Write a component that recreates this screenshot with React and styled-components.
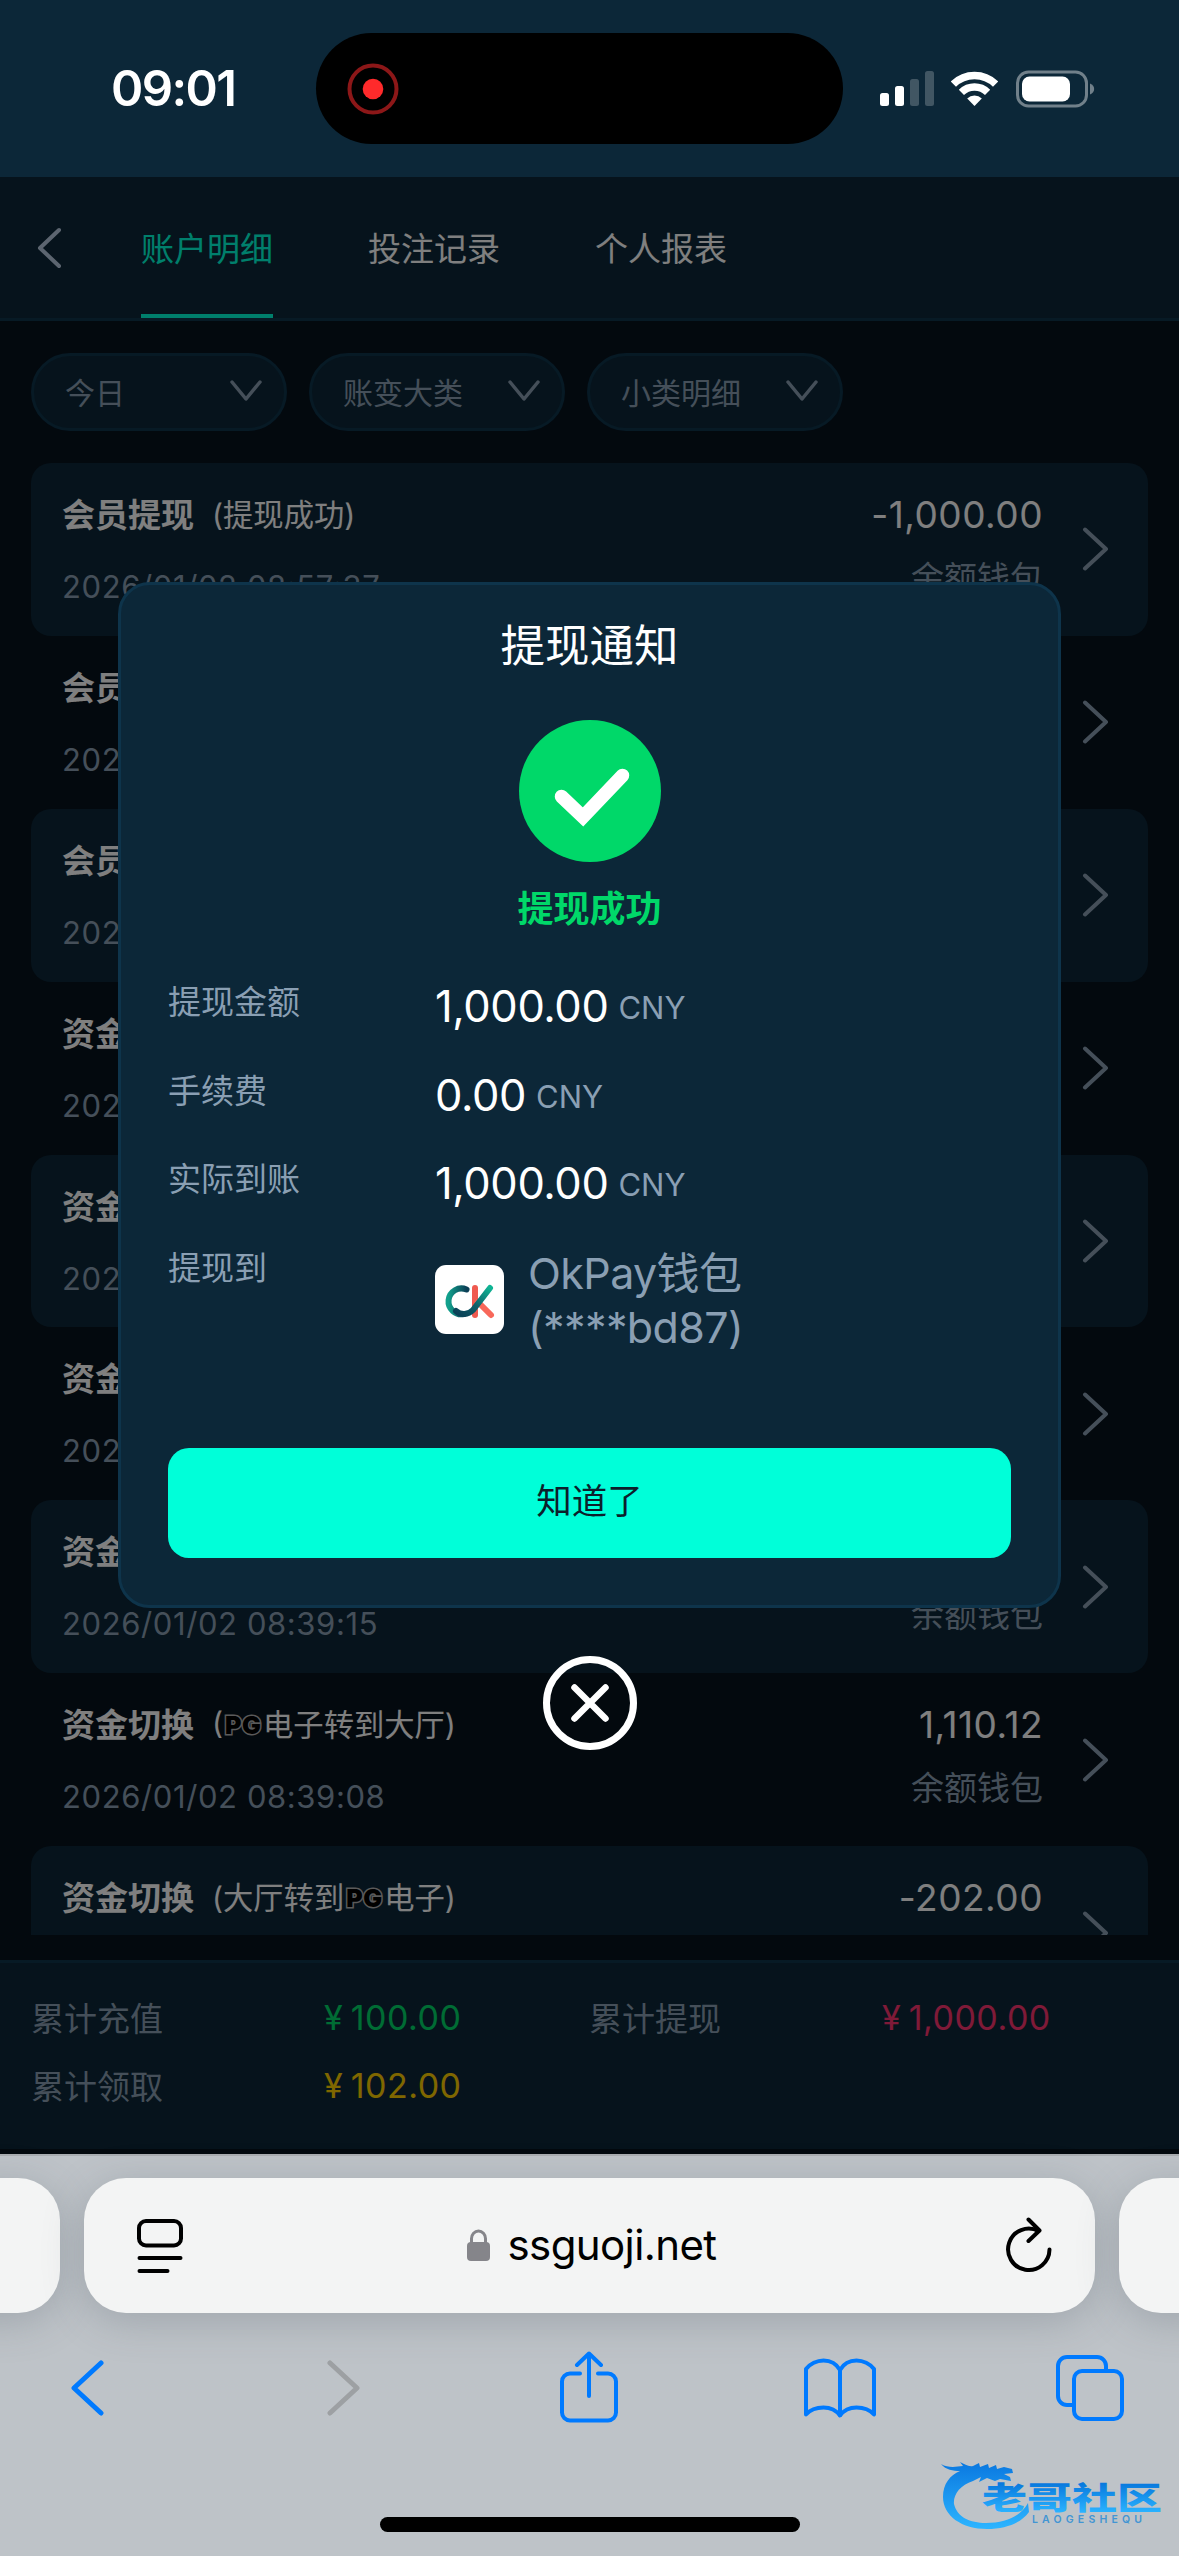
import React from 'react'
import styled, {createGlobalStyle} from 'styled-components'

const colors = {
  panel: '#0c2738',
  page: '#07121d',
  line: '#0e344b',
  text: '#ffffff',
  muted: '#8a9fb3',
  accent: '#00ffd9',
  green: '#00d869',
  red: '#ff3470',
  yellow: '#ffcf00',
  ios: '#007aff',
}

const GlobalStyle = createGlobalStyle`
  * { box-sizing: border-box; }
  body {
    margin: 0;
    background: ${colors.page};
    font-family: Inter, 'Noto Sans CJK SC', sans-serif;
  }
  svg { display: block; flex: none; }
`

const Screen = styled.div`
  position: relative;
  display: flex;
  flex-direction: column;
  width: 1179px;
  height: 2556px;
  overflow: hidden;
  background: ${colors.page};
  color: ${colors.text};
`

/* Status bar */

const StatusBar = styled.header`
  display: grid;
  grid-template-columns: 316px 527px 1fr;
  align-items: center;
  height: 177px;
  background: ${colors.panel};
`

const Clock = styled.div`
  padding-left: 111px;
  font-size: 49px;
  font-weight: 600;
  line-height: 60px;
  letter-spacing: -1.6px;
`

const Island = styled.div`
  display: flex;
  align-items: center;
  height: 111px;
  padding-left: 31px;
  border-radius: 56px;
  background: #000;
`

const StatusIcons = styled.div`
  display: flex;
  align-items: center;
  gap: 17px;
  padding-left: 37px;
`

/* Account page */

const Account = styled.main`
  display: flex;
  flex-direction: column;
  height: 1978px;
`

const NavBar = styled.nav`
  display: flex;
  height: 144px;
  padding-left: 37px;
  align-items: stretch;
  background: ${colors.panel};
  border-bottom: 3px solid ${colors.line};
`

const Back = styled.button`
  display: flex;
  align-items: center;
  width: 104px;
  padding: 0;
  border: 0;
  background: none;
`

const Tabs = styled.div`
  display: flex;
  gap: 95px;
`

const Tab = styled.a`
  display: flex;
  align-items: center;
  padding-top: 2px;
  font-size: 33px;
  color: ${p => p.$active ? colors.accent : colors.text};
  border-bottom: 4px solid ${p => p.$active ? colors.accent : 'transparent'};
`

const Filters = styled.div`
  display: flex;
  gap: 22px;
  padding: 32px 31px;
`

const Filter = styled.div`
  display: flex;
  align-items: center;
  justify-content: space-between;
  width: 256px;
  height: 78px;
  padding: 0 21px 3px 31px;
  border: 3px solid ${colors.line};
  border-radius: 39px;
  background: ${colors.panel};
  font-size: 30px;
  color: ${colors.muted};
`

const List = styled.div`
  height: 1472px;
  margin: 0 31px 25px;
  overflow: hidden;
`

const Entry = styled.div`
  display: grid;
  grid-template-columns: 1fr auto 28px;
  column-gap: 39px;
  align-items: center;
  height: 172.9px;
  padding: 0 38px 0 31px;
  border-radius: 20px;

  &:nth-child(odd) {
    background: ${colors.panel};
  }
`

const EntryInfo = styled.div`
  align-self: start;
  padding-top: 26px;
`

const EntryTitle = styled.div`
  display: flex;
  align-items: center;
  height: 48px;
  font-size: 33px;
  font-weight: 700;
`

const EntryNote = styled.span`
  display: flex;
  align-items: center;
  margin-left: 18px;
  font-size: 30.3px;
  font-weight: 400;
`

const EntryDate = styled.div`
  margin-top: 26px;
  font-size: 31px;
  line-height: 48px;
  letter-spacing: 0.6px;
  color: ${colors.muted};
`

const EntryAmount = styled.div`
  align-self: start;
  padding-top: 28px;
  text-align: right;
  font-size: 37px;
  line-height: 48px;
  letter-spacing: 0.5px;
`

const Wallet = styled.div`
  margin-top: 15px;
  font-size: 33px;
  line-height: 48px;
  letter-spacing: 0;
  color: ${colors.muted};
`

const Brand = styled.span`
  width: 40px;
  padding: 3px 0 0 2px;
  font-size: 25px;
  font-weight: 900;
  letter-spacing: 0.5px;
  color: #000;
  paint-order: stroke;
  -webkit-text-stroke: 3px #b4b4b4;
`

const Summary = styled.footer`
  display: grid;
  grid-template-columns: 293px 265px 293px 1fr;
  grid-auto-rows: 68px;
  height: 189px;
  padding: 20px 0 0 31px;
  align-items: center;
  background: ${colors.panel};
  border-top: 3px solid ${colors.line};
  font-size: 33px;
`

const SummaryLabel = styled.span`
  color: ${colors.muted};
`

const SummaryValue = styled.span`
  font-size: 34px;
  letter-spacing: 0.5px;
  color: ${p => p.$color};

  &::first-letter {
    letter-spacing: 8px;
  }
`

/* Withdrawal notice */

const Overlay = styled.div`
  position: absolute;
  top: 177px;
  left: 0;
  display: flex;
  flex-direction: column;
  align-items: center;
  width: 1179px;
  height: 1978px;
  padding-top: 405px;
  background: rgba(0, 0, 0, 0.5);
`

const Dialog = styled.section`
  display: flex;
  flex-direction: column;
  align-items: center;
  width: 943px;
  height: 1026px;
  padding: 29px 47px 47px;
  border: 3px solid ${colors.line};
  border-radius: 32px;
  background: ${colors.panel};
`

const DialogTitle = styled.h2`
  margin: 0 0 42px;
  font-size: 44.5px;
  font-weight: 400;
  line-height: 64px;
`

const Result = styled.p`
  margin: 23px 0 41px;
  font-size: 36px;
  font-weight: 700;
  line-height: 48px;
  color: ${colors.green};
`

const Details = styled.dl`
  display: grid;
  grid-template-columns: 267px 1fr;
  grid-auto-rows: 88.6px;
  width: 100%;
  margin: 0;
`

const Term = styled.dt`
  font-size: 33px;
  line-height: 56px;
  color: ${colors.muted};
`

const Value = styled.dd`
  margin: 0;
  padding-top: 2px;
  font-size: 43.5px;
  line-height: 60px;
  letter-spacing: -0.4px;
`

const Unit = styled.span`
  margin-left: 10px;
  font-size: 31px;
  letter-spacing: 0;
  vertical-align: 3px;
  color: ${colors.muted};
`

const Payee = styled.dd`
  display: flex;
  align-items: center;
  gap: 24px;
  height: 108px;
  margin: 6px 0 0;
  font-size: 43px;
  line-height: 54px;
  letter-spacing: -0.6px;
  color: ${colors.muted};
`

const Confirm = styled.button`
  width: 843px;
  height: 110px;
  margin-top: auto;
  padding: 0 0 9px;
  border: 0;
  border-radius: 21px;
  background: ${colors.accent};
  color: #0c1f2c;
  font: inherit;
  font-size: 35.5px;
`

const Close = styled.button`
  margin-top: 48px;
  padding: 0;
  border: 0;
  background: none;
`

/* Safari chrome */

const Browser = styled.div`
  display: flex;
  flex-direction: column;
  height: 402px;
  margin-top: -1px;
  padding-top: 22px;
  border-top: 2px solid #a9adb1;
  background: #bec3c8;
  color: #000;
  z-index: 1;
`

const AddressRow = styled.div`
  display: flex;
  justify-content: center;
  gap: 24px;
`

const TabCard = styled.div`
  display: flex;
  flex: none;
  align-items: center;
  justify-content: space-between;
  width: 1011px;
  height: 135px;
  padding: 0 43px 0 53px;
  border-radius: 42px;
  background: #f3f4f4;
  box-shadow: 0 8px 40px rgba(80, 90, 100, 0.28);
`

const Url = styled.div`
  display: flex;
  align-items: center;
  gap: 18px;
  padding: 0 6px 1px 0;
  font-size: 42px;
  line-height: 50px;
  letter-spacing: -0.6px;
`

const Toolbar = styled.div`
  display: flex;
  align-items: center;
  justify-content: space-between;
  height: 150px;
  padding: 0 53px 0 52px;
`

const ToolButton = styled.button`
  display: flex;
  justify-content: center;
  width: 72px;
  padding: 0 0 ${p => p.$lift || 0}px;
  border: 0;
  background: none;
`

const HomeIndicator = styled.div`
  width: 420px;
  height: 15px;
  margin: 54px auto 0;
  border-radius: 8px;
  background: #000;
`

const Watermark = styled.svg`
  position: absolute;
  left: 930px;
  top: 2450px;
  z-index: 2;
`

const Chevron = ({w, h, d, color = colors.muted, stroke = 4}) => (
  <svg width={w} height={h} fill="none" stroke={color} strokeWidth={stroke} strokeLinecap="round" strokeLinejoin="round">
    <path d={d}/>
  </svg>
)

const RecordIcon = () => (
  <svg width="52" height="52">
    <circle cx="26" cy="26" r="23.5" fill="none" stroke="#8c1718" strokeWidth="4"/>
    <circle cx="26" cy="26" r="10.3" fill="#ff2a2b"/>
  </svg>
)

const SignalIcon = () => (
  <svg width="54" height="36" fill="#fff">
    <rect x="0" y="22" width="9" height="13" rx="2.5"/>
    <rect x="15" y="15" width="9" height="20" rx="2.5"/>
    <rect x="30" y="8" width="9" height="27" rx="2.5" opacity=".22"/>
    <rect x="45" y="0" width="9" height="35" rx="2.5" opacity=".22"/>
  </svg>
)

const WifiIcon = () => (
  <svg width="47" height="36" fill="none" stroke="#fff" strokeWidth="7.4">
    <path d="M2.4 13.2a30 30 0 0 1 42.2 0"/>
    <path d="M10.4 21.4a18.7 18.7 0 0 1 26.2 0"/>
    <path d="M23.5 35l-7.3-7.6a10.6 10.6 0 0 1 14.6 0z" fill="#fff" stroke="none"/>
  </svg>
)

const BatteryIcon = () => (
  <svg width="80" height="38">
    <rect x="2.5" y="2" width="69" height="34" rx="11" fill="none" stroke="#71808a" strokeWidth="3"/>
    <rect x="7" y="6.5" width="48" height="25" rx="7.5" fill="#fff"/>
    <path d="M75 13.5c5.5 2 5.5 9 0 11z" fill="#71808a"/>
  </svg>
)

const SuccessIcon = () => (
  <svg width="142" height="142" fill="none">
    <circle cx="71" cy="71" r="71" fill={colors.green}/>
    <path d="M42.5 76.5l21.5 20.5L103.5 55.5" stroke="#fff" strokeWidth="13.5" strokeLinecap="round"/>
  </svg>
)

const OkPayLogo = () => (
  <svg width="69" height="69" viewBox="0 0 69 69" fill="none" strokeLinecap="round" strokeWidth="6">
    <defs>
      <linearGradient id="okArc" x1="0" y1="0" x2="1" y2="0">
        <stop offset="0" stopColor="#12a08c"/>
        <stop offset="1" stopColor="#0b3f56"/>
      </linearGradient>
      <linearGradient id="okArm" x1="0" y1="1" x2="1" y2="0">
        <stop offset="0" stopColor="#0b3f56"/>
        <stop offset=".45" stopColor="#0d5e68"/>
        <stop offset="1" stopColor="#10b494"/>
      </linearGradient>
    </defs>
    <rect width="69" height="69" rx="11" fill="#fff"/>
    <path d="M40 23v27" stroke="#ef5a50"/>
    <path d="M43 37l13 13" stroke="#f8685a"/>
    <path d="M31.5 24.5a12.9 12.9 0 1 0-2.5 24.5" stroke="url(#okArc)"/>
    <path d="M21 46c5 4.5 12 4 17-1L55 23" stroke="url(#okArm)"/>
  </svg>
)

const CloseIcon = () => (
  <svg width="94" height="94" fill="none" stroke="#fff" strokeLinecap="round">
    <circle cx="47" cy="47" r="43.5" strokeWidth="7"/>
    <path d="M31.5 31.5l31 31M62.5 31.5l-31 31" strokeWidth="6.5"/>
  </svg>
)

const PageMenuIcon = () => (
  <svg width="46" height="54" fill="none" stroke="#000" strokeWidth="4" strokeLinecap="round">
    <rect x="2" y="2" width="42" height="24.5" rx="7"/>
    <path d="M2.5 39h41M2.5 52h28"/>
  </svg>
)

const LockIcon = () => (
  <svg width="23" height="32">
    <rect y="13" width="23" height="19" rx="4" fill="#85858a"/>
    <path d="M4.5 15V9.5a7 7.5 0 0 1 14 0V15" fill="none" stroke="#85858a" strokeWidth="3"/>
  </svg>
)

const ReloadIcon = () => (
  <svg width="46" height="58" fill="none" stroke="#000" strokeWidth="4" strokeLinecap="round" strokeLinejoin="round">
    <path d="M43.5 32.5a20.700 20.700 0 1 1-11-18.500"/>
    <path d="M22.5 2.5L33.5 13.5 22.5 24"/>
  </svg>
)

const ShareIcon = () => (
  <svg width="58" height="72" fill="none" stroke={colors.ios} strokeWidth="4" strokeLinecap="round" strokeLinejoin="round">
    <path d="M20 22.5H10a8 8 0 0 0-8 8V61.5a8 8 0 0 0 8 8H48a8 8 0 0 0 8-8V30.5a8 8 0 0 0-8-8H38"/>
    <path d="M29 45V2.5M17 14L29 2.5 41 14"/>
  </svg>
)

const BookIcon = () => (
  <svg width="72" height="60" fill="none" stroke={colors.ios} strokeWidth="4" strokeLinecap="round" strokeLinejoin="round">
    <path d="M36 12C32 5 26 2.5 19.5 2.5S6 6 2 11V56.5C6 52 12 49.5 19.5 49.5S32 52 36 57.5C40 52 45 49.5 52.5 49.5S66 52 70 56.5V11C66 6 59 2.5 52.5 2.5S40 5 36 12z"/>
    <path d="M36 12V57"/>
  </svg>
)

const TabsIcon = () => (
  <svg width="68" height="66" fill="none" stroke={colors.ios} strokeWidth="4">
    <rect x="18" y="16" width="48" height="48" rx="8"/>
    <path d="M18 50h-7a9 9 0 0 1-9-9V11a9 9 0 0 1 9-9H41a9 9 0 0 1 9 9v5"/>
  </svg>
)

const WatermarkLogo = () => (
  <Watermark width="240" height="86">
    <defs>
      <linearGradient id="wm" gradientUnits="userSpaceOnUse" x1="0" y1="12" x2="0" y2="78">
        <stop offset="0" stopColor="#0a78e0"/>
        <stop offset="1" stopColor="#2cb4ff"/>
      </linearGradient>
      <linearGradient id="wmText" gradientUnits="userSpaceOnUse" x1="0" y1="33" x2="0" y2="62">
        <stop offset="0" stopColor="#0878dd"/>
        <stop offset="1" stopColor="#2ab2ff"/>
      </linearGradient>
    </defs>
    <path
      fill="url(#wm)"
      d="M11 14C18 18 25 17 33 16L30 12C35 14 38 17 43 16L49 13 50 17 58 14 59 18 66 15 67 19 74 17 82 19 83 23 74 24 80 27 81 31 70 29 65 31 57 28 49 32 51 27 43 31C30 35 23 45 24 54C27 67 40 73 56 73C76 73 91 66 98 53L99 62C91 73 76 79 57 79C32 79 13 66 13 47C13 34 20 25 30 21C23 21 16 20 11 14Z"
    />
    <text x="52" y="59" textLength="180" fill="url(#wmText)" fontFamily="'Noto Sans CJK SC', sans-serif" fontSize="31" fontWeight="900" lengthAdjust="spacingAndGlyphs">老哥社区</text>
    <text x="102" y="72.5" textLength="110" fill="#4295d3" fontFamily="Inter, sans-serif" fontSize="10.5" fontWeight="600">LAOGESHEQU</text>
  </Watermark>
)

// entries behind the dialog only show their title and date
const entries = [
  {title: '会员提现', note: '(提现成功)', date: '2026/01/02 08:57:37', amount: '-1,000.00'},
  {title: '会员提现', date: '2026/01/02'},
  {title: '会员提现', date: '2026/01/02'},
  {title: '资金切换', date: '2026/01/02'},
  {title: '资金切换', date: '2026/01/02'},
  {title: '资金切换', date: '2026/01/02'},
  {title: '资金切换', date: '2026/01/02 08:39:15', amount: '\u00a0'},
  {title: '资金切换', note: <>(<Brand>PG</Brand>电子转到大厅)</>, date: '2026/01/02 08:39:08', amount: '1,110.12'},
  {title: '资金切换', note: <>(大厅转到<Brand>PG</Brand>电子)</>, amount: '-202.00'},
]

const totals = [
  {label: '累计充值', value: '¥100.00', color: colors.green},
  {label: '累计提现', value: '¥1,000.00', color: colors.red},
  {label: '累计领取', value: '¥102.00', color: colors.yellow},
]

const details = [
  {label: '提现金额', value: '1,000.00'},
  {label: '手续费', value: '0.00'},
  {label: '实际到账', value: '1,000.00'},
]

const App = () => {
  return (
    <Screen>
      <GlobalStyle/>
      <StatusBar>
        <Clock>09:01</Clock>
        <Island><RecordIcon/></Island>
        <StatusIcons>
          <SignalIcon/>
          <WifiIcon/>
          <BatteryIcon/>
        </StatusIcons>
      </StatusBar>

      <Account>
        <NavBar>
          <Back><Chevron w={27} h={42} d="M22 3L3 21 22 39" color="#b9cbe0"/></Back>
          <Tabs>
            <Tab $active>账户明细</Tab>
            <Tab>投注记录</Tab>
            <Tab>个人报表</Tab>
          </Tabs>
        </NavBar>

        <Filters>
          {['今日', '账变大类', '小类明细'].map(name =>
            <Filter key={name}>
              {name}
              <Chevron w={33} h={22} d="M2 2L16 19 30 2" stroke={3.5}/>
            </Filter>
          )}
        </Filters>

        <List>
          {entries.map((entry, i) =>
            <Entry key={i}>
              <EntryInfo>
                <EntryTitle>
                  {entry.title}
                  {entry.note && <EntryNote>{entry.note}</EntryNote>}
                </EntryTitle>
                {entry.date && <EntryDate>{entry.date}</EntryDate>}
              </EntryInfo>
              <EntryAmount>
                {entry.amount}
                {entry.amount && entry.date && <Wallet>余额钱包</Wallet>}
              </EntryAmount>
              <Chevron w={28} h={44} d="M3 2.5L24 22 3 41.5"/>
            </Entry>
          )}
        </List>

        <Summary>
          {totals.map(({label, value, color}) =>
            <React.Fragment key={label}>
              <SummaryLabel>{label}</SummaryLabel>
              <SummaryValue $color={color}>{value}</SummaryValue>
            </React.Fragment>
          )}
        </Summary>
      </Account>

      <Browser>
        <AddressRow>
          <TabCard/>
          <TabCard>
            <PageMenuIcon/>
            <Url><LockIcon/>ssguoji.net</Url>
            <ReloadIcon/>
          </TabCard>
          <TabCard/>
        </AddressRow>
        <Toolbar>
          <ToolButton><Chevron w={36} h={56} d="M31 3L4 28 31 53" color={colors.ios} stroke={5}/></ToolButton>
          <ToolButton><Chevron w={42} h={56} d="M12 3L39 28 12 53" color="#9da0a3" stroke={5}/></ToolButton>
          <ToolButton $lift={2}><ShareIcon/></ToolButton>
          <ToolButton><BookIcon/></ToolButton>
          <ToolButton><TabsIcon/></ToolButton>
        </Toolbar>
        <HomeIndicator/>
      </Browser>

      <Overlay>
        <Dialog>
          <DialogTitle>提现通知</DialogTitle>
          <SuccessIcon/>
          <Result>提现成功</Result>
          <Details>
            {details.map(({label, value}) =>
              <React.Fragment key={label}>
                <Term>{label}</Term>
                <Value>{value}<Unit>CNY</Unit></Value>
              </React.Fragment>
            )}
            <Term>提现到</Term>
            <Payee>
              <OkPayLogo/>
              <div>OkPay钱包<br/>(****bd87)</div>
            </Payee>
          </Details>
          <Confirm>知道了</Confirm>
        </Dialog>
        <Close><CloseIcon/></Close>
      </Overlay>

      <WatermarkLogo/>
    </Screen>
  )
}

export default App
